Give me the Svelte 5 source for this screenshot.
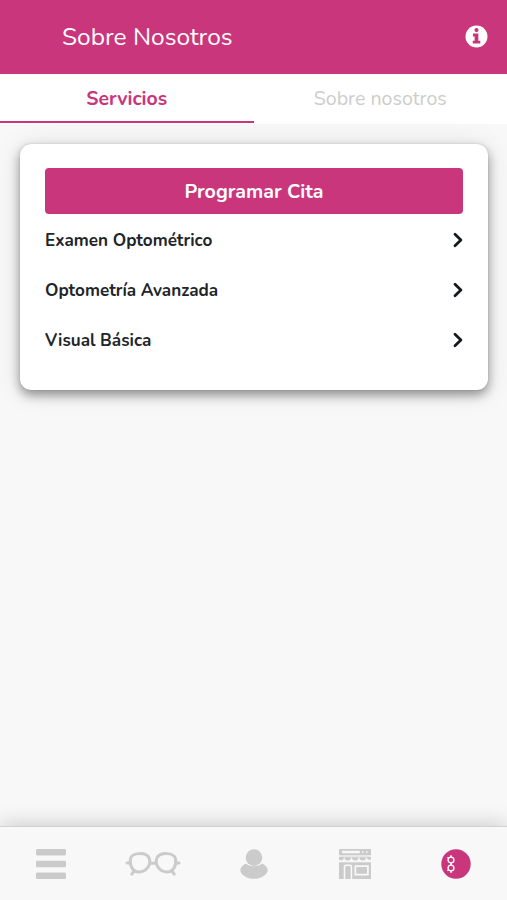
<script>
  const services = ['Examen Optométrico', 'Optometría Avanzada', 'Visual Básica'];
</script>

<main class="app">
  <header class="topbar">
    <h1>Sobre Nosotros</h1>
    <svg class="info" viewBox="0 0 22 22" aria-label="Información">
      <circle cx="11" cy="11" r="10.5" fill="#fff" />
      <circle cx="11" cy="4.9" r="2" fill="#c9367b" />
      <path d="M7.6 8.2h5.2v6.8h1.8v2.8H7.4V15h1.8v-4H7.6z" fill="#c9367b" />
    </svg>
  </header>

  <nav class="tabs">
    <button class="tab active">Servicios</button>
    <button class="tab">Sobre nosotros</button>
  </nav>

  <section class="content">
    <div class="card">
      <button class="book">Programar Cita</button>
      {#each services as service}
        <div class="row">
          <span>{service}</span>
          <svg class="chevron" viewBox="0 0 10 16">
            <path d="M2 2.2l5.9 5.800L2 13.800" />
          </svg>
        </div>
      {/each}
    </div>
  </section>

  <footer class="bottombar">
    <div class="item">
      <svg class="menu" width="32" height="32" viewBox="0 0 32 32" fill="#cbcbcb">
        <rect x="1" y="1" width="30" height="6.4" rx="1.3" />
        <rect x="1" y="12.8" width="30" height="6.4" rx="1.3" />
        <rect x="1" y="24.6" width="30" height="6.4" rx="1.3" />
      </svg>
    </div>
    <div class="item">
      <svg class="glasses" width="56" height="26" viewBox="0 0 56 26" fill="none" stroke="#cbcbcb" stroke-width="3" stroke-linecap="round">
        <path d="M5.500 7.500C7 1.500 21.500 .5 24.300 7.500C26.500 14 21 21 14 21C7.500 21 4.200 14 5.500 7.500z" />
        <path d="M50.500 7.500C49 1.500 34.500 .5 31.700 7.500C29.500 14 35 21 42 21C48.500 21 51.800 14 50.500 7.500z" />
        <path d="M25.5 12.200h5M2 12h3M51 12h3M9.500 19.500l-2.700 3.700M46.500 19.500l2.700 3.700" />
      </svg>
    </div>
    <div class="item">
      <svg width="28" height="30" viewBox="0 0 28 30" fill="#cbcbcb">
        <path d="M6 14.600C2.700 16.200.3 18.800.3 21.200C.3 25 6.400 29.800 14 29.800S27.700 25 27.700 21.200C27.700 18.800 25.300 16.200 22 14.600C19.500 18 8.500 18 6 14.600z" />
        <circle cx="14" cy="8.600" r="8.300" />
      </svg>
    </div>
    <div class="item">
      <svg width="34" height="30" viewBox="0 0 34 30" fill="#cbcbcb">
        <path fill-rule="evenodd" d="M2 0h30a1 1 0 0 1 1 1v5H1V1a1 1 0 0 1 1-1zM4.200 1.800v2.400h17.500V1.800zM24 2.200v1.600h1.500V2.200zM28 2.200v1.600h1.500V2.200z" />
        <path d="M1 6h32v3.200H1z" opacity=".35" />
        <path d="M1 8h5a3 3 0 0 1-5 2.500zM6.500 8.300h6.400a3.200 3.200 0 0 1-6.400 0zM14 8.300h6.400a3.200 3.200 0 0 1-6.400 0zM21.500 8.300h6.400a3.200 3.200 0 0 1-6.400 0zM28.700 8H33v2.500a3 3 0 0 1-4.300-2.500z" />
        <path fill-rule="evenodd" d="M1 13.200h32V30H14.200V17.500a2 2 0 0 0-2-2H7.700a2 2 0 0 0-2 2V30H1zM16.500 16.200v10.200h14.300V16.200z" />
        <path d="M7.300 30V18a1 1 0 0 1 1-1h3.300a1 1 0 0 1 1 1v12zM18.200 18h10.800v6.700H18.200z" />
      </svg>
    </div>
    <div class="item">
      <svg width="30" height="30" viewBox="0 0 30 30">
        <circle cx="15" cy="15" r="14.700" fill="#c9367b" />
        <g fill="none" stroke="#fff" stroke-width="1.400" stroke-linecap="round">
          <circle cx="10" cy="11" r="2.900" />
          <circle cx="10" cy="19" r="2.900" />
          <path d="M10 14v2M10 6.700v1.400M10 22v1.400M7.500 8.800l-.700-.200M7.500 21.200l-.700.200" />
        </g>
      </svg>
    </div>
  </footer>
</main>

<style>
  .app {
    display: flex;
    flex-direction: column;
    height: 900px;
    overflow: hidden;
    background: #f8f8f8;
    color: #212529;
    font-family: Nunito, Lato, "Open Sans", sans-serif;
  }
  button {
    margin: 0;
    border: 0;
    padding: 0;
    font: inherit;
    background: none;
  }
  .topbar {
    flex: none;
    display: flex;
    align-items: center;
    justify-content: space-between;
    box-sizing: border-box;
    height: 74px;
    padding: 0 19px 0 62px;
    background: #c9367b;
    color: #fff;
  }
  h1 {
    margin: 0;
    font-size: 24.5px;
    font-weight: 400;
    line-height: 34px;
  }
  .info {
    width: 23px;
    height: 23px;
    margin-bottom: 1px;
  }
  .tabs {
    flex: none;
    display: flex;
    height: 50px;
    background: #fff;
  }
  .tab {
    flex: 1;
    box-sizing: border-box;
    height: 49px;
    padding-top: 2px;
    border-bottom: 2px solid transparent;
    color: #cdcdcd;
    font-size: 19.6px;
    line-height: 45px;
  }
  .active {
    border-bottom-color: #c9367b;
    color: #c9367b;
    font-size: 19.4px;
    font-weight: 700;
  }
  .content {
    flex: 1;
    padding: 20px 19px 0 20px;
  }
  .card {
    box-sizing: border-box;
    height: 246px;
    padding: 24px 25px 0;
    border-radius: 11px;
    background: #fff;
    box-shadow: 0 0 1px rgba(0, 0, 0, 0.3), 0 5px 11px rgba(0, 0, 0, 0.4), 0 2px 28px rgba(0, 0, 0, 0.1);
  }
  .book {
    display: block;
    width: 100%;
    height: 46px;
    padding-top: 1px;
    border-radius: 4px;
    background: #c9367b;
    color: #fff;
    font-size: 19.6px;
    font-weight: 700;
    line-height: 45px;
  }
  .row {
    display: flex;
    align-items: center;
    justify-content: space-between;
    height: 50px;
    font-size: 17.1px;
    font-weight: 700;
  }
  .row span {
    padding-top: 2px;
  }
  .chevron {
    width: 10px;
    height: 16px;
    margin-top: 2px;
  }
  .chevron path {
    fill: none;
    stroke: #161a1d;
    stroke-width: 2.8;
    stroke-linecap: round;
    stroke-linejoin: round;
  }
  .bottombar {
    flex: none;
    display: flex;
    box-sizing: border-box;
    height: 74px;
    border-top: 1px solid #d2d2d2;
    padding-top: 1px;
    background: #f8f8f8;
    box-shadow: 0 -2px 20px rgba(0, 0, 0, 0.18);
  }
  .item {
    flex: 1;
    display: flex;
    align-items: center;
    justify-content: center;
  }
  .menu,
  .glasses {
    margin-left: 1px;
  }
</style>
